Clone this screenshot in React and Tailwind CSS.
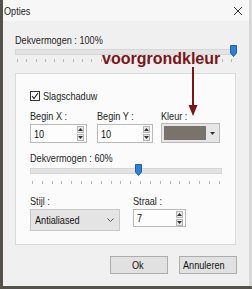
import React from "react";

// de schermafbeelding is horizontaal wat samengedrukt, vandaar scale-x op de teksten
const Txt = ({ children, className = "" }) => (
  <span
    className={
      "inline-block whitespace-nowrap origin-left scale-x-[0.83] text-[11px] leading-[14px] text-[#1e1e1e] " +
      className
    }
  >
    {children}
  </span>
);

const Thumb = () => (
  <svg width="7" height="12" viewBox="0 0 7 12" className="absolute">
    <path d="M0.5 0.5 H6.5 V8 L3.5 11.5 L0.5 8 Z" fill="#2f7fd6" stroke="#1f5fae" strokeWidth="1" />
  </svg>
);

const Slider = ({ width, thumbLeft, ticks, tickGap }) => (
  <div className="flex flex-col" style={{ width }}>
    <div className="relative h-[6px] w-full bg-[#e3e3e3] border border-[#d6d6d6]">
      <div className="absolute top-[-5px]" style={{ left: thumbLeft }}>
        <Thumb />
      </div>
    </div>
    <div className="flex justify-between px-[2px]" style={{ marginTop: tickGap }}>
      {Array.from({ length: ticks }).map((_, i) => (
        <div key={i} className="w-px h-[3px] bg-[#b8b8b8]" />
      ))}
    </div>
  </div>
);

const Spinner = () => (
  <div className="flex flex-col gap-px mr-[2px]">
    <div className="w-[7px] h-[7px] bg-[#e8e8e8] border border-[#b5b5b5] flex items-center justify-center">
      <svg width="5" height="3" viewBox="0 0 5 3"><path d="M2.5 0 L5 3 H0 Z" fill="#333" /></svg>
    </div>
    <div className="w-[7px] h-[7px] bg-[#e8e8e8] border border-[#b5b5b5] flex items-center justify-center">
      <svg width="5" height="3" viewBox="0 0 5 3"><path d="M0 0 H5 L2.5 3 Z" fill="#333" /></svg>
    </div>
  </div>
);

const NumberField = ({ label, value, width, height }) => (
  <div className="flex flex-col">
    <Txt>{label}</Txt>
    <div
      className="mt-[1px] flex items-center justify-between bg-[#fdfdfd] border border-[#b9b9b9] pl-[3px]"
      style={{ width, height }}
    >
      <Txt className="text-[#111]">{value}</Txt>
      <Spinner />
    </div>
  </div>
);

const Button = ({ children }) => (
  <div className="w-[58px] h-[18px] bg-[#e1e1e1] border border-[#adadad] flex items-center justify-center">
    <Txt className="origin-center text-[#111]">{children}</Txt>
  </div>
);

export default function App() {
  return (
    <div className="w-[252px] h-[289px] bg-[#55524b] flex font-['Liberation_Sans',Arial,sans-serif]">
      <div className="ml-[3px] mb-[3px] w-[246px] h-[286px] bg-[#f0f0f0] flex flex-col relative">
        {/* titelbalk */}
        <div className="h-[21px] bg-[#f7f7f7] flex items-center justify-between pl-[1px] pr-[6px]">
          <Txt>Opties</Txt>
          <svg width="10" height="10" viewBox="0 0 10 10">
            <path d="M1 1 L9 9 M9 1 L1 9" stroke="#333" strokeWidth="1" />
          </svg>
        </div>

        <div className="pl-[12px] pr-[13px] flex flex-col">
          <Txt className="mt-[12px]">Dekvermogen : 100%</Txt>
          <div className="mt-[2px]">
            <Slider width={219} thumbLeft={214} ticks={24} tickGap={4} />
          </div>

          {/* groep */}
          <div className="mt-[11px] h-[172px] bg-[#fbfbfb] border border-[#dadada] pl-[14px] flex flex-col">
            <div className="mt-[15px] h-[14px] flex items-center gap-[3px]">
              <div className="w-[10px] h-[10px] border border-[#333] bg-white flex items-center justify-center">
                <svg width="8" height="8" viewBox="0 0 8 8">
                  <path d="M1 4 L3 6.5 L7 1" stroke="#222" strokeWidth="1.1" fill="none" />
                </svg>
              </div>
              <Txt>Slagschaduw</Txt>
            </div>

            <div className="mt-[6px] flex gap-[10px]">
              <NumberField label="Begin X :" value="10" width={57} height={19} />
              <NumberField label="Begin Y :" value="10" width={56} height={19} />
              <div className="flex flex-col ml-[-2px]">
                <Txt>Kleur :</Txt>
                <div className="w-[59px] h-[20px] bg-[#e6e6e6] border border-[#b9b9b9] flex items-center p-[2px] gap-[2px]">
                  <div className="w-[42px] h-[14px] bg-[#79736c]" />
                  <div className="flex-1 flex justify-center">
                    <svg width="5" height="3" viewBox="0 0 5 3"><path d="M0 0 H5 L2.5 3 Z" fill="#333" /></svg>
                  </div>
                </div>
              </div>
            </div>

            <Txt className="mt-[8px]">Dekvermogen : 60%</Txt>
            <div className="mt-[3px]">
              <Slider width={192} thumbLeft={104} ticks={20} tickGap={7} />
            </div>

            <div className="mt-[10px] flex gap-[13px]">
              <div className="flex flex-col">
                <Txt>Stijl :</Txt>
                <div className="mt-[1px] w-[90px] h-[22px] bg-[#e4e4e4] border border-[#c8c8c8] flex items-center justify-between pl-[4px] pr-[5px]">
                  <Txt className="text-[#111]">Antialiased</Txt>
                  <svg width="7" height="4" viewBox="0 0 7 4">
                    <path d="M0.5 0.5 L3.5 3.5 L6.5 0.5" stroke="#555" fill="none" />
                  </svg>
                </div>
              </div>
              <NumberField label="Straal :" value="7" width={53} height={18} />
            </div>
          </div>

          {/* knoppen */}
          <div className="mt-[11px] flex justify-end gap-[11px] mr-[-1px]">
            <Button>Ok</Button>
            <Button>Annuleren</Button>
          </div>
        </div>

        {/* annotatie */}
        <div className="absolute left-[99px] top-[50px] flex flex-col items-start">
          <span className="text-[16px] leading-[18px] font-bold text-[#7d1518] whitespace-nowrap">
            voorgrondkleur
          </span>
          <svg width="10" height="50" viewBox="0 0 10 50" className="ml-[86px] mt-[-1px]">
            <path d="M5 0 V40" stroke="#7d1518" strokeWidth="2" />
            <path d="M0.5 38 L5 49 L9.5 38 Z" fill="#7d1518" />
          </svg>
        </div>
      </div>
      <div className="w-[3px] h-[286px] bg-[#d8d8d8]" />
    </div>
  );
}
